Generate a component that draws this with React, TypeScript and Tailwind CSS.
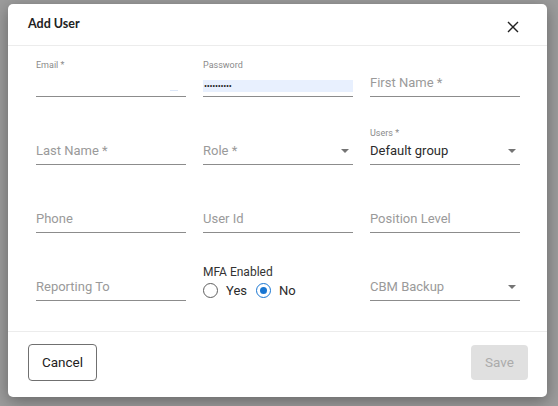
import React from 'react';

const font = { fontFamily: 'Roboto, "Liberation Sans", sans-serif' };

function Arrow() {
  return (
    <svg width="8" height="4" viewBox="0 0 8 4" className="shrink-0">
      <path d="M0 0 L8 0 L4 4 Z" fill="#747474" />
    </svg>
  );
}

function Field({
  label,
  placeholder,
  value,
  select,
}: {
  label?: string;
  placeholder?: string;
  value?: string;
  select?: boolean;
}) {
  return (
    <div className="flex h-[40px] flex-col justify-end">
      {label && <div className="mb-auto mt-[2px] text-[9px] leading-[12px] text-[#8a8a8a]">{label}</div>}
      <div className="flex h-[24px] items-center border-b border-[#8c8c8c] pb-[3px]">
        <span className={`flex-1 text-[13px] leading-[16px] ${value ? 'text-[#2b2b2b]' : 'text-[#9a9a9a]'}`}>
          {value ?? placeholder}
        </span>
        {select && (
          <span className="mr-[4px]">
            <Arrow />
          </span>
        )}
      </div>
    </div>
  );
}

function Radio({ checked }: { checked?: boolean }) {
  return (
    <span
      className={`flex h-[15px] w-[15px] items-center justify-center rounded-full border-[1.5px] ${
        checked ? 'border-[#1976d2]' : 'border-[#5f5f5f]'
      }`}
    >
      {checked && <span className="h-[7px] w-[7px] rounded-full bg-[#1976d2]" />}
    </span>
  );
}

export default function App() {
  return (
    <div className="h-[406px] w-full bg-[#9c9c9c] pl-[8px] pt-[4px]" style={font}>
      <div className="flex h-[393px] w-[539px] flex-col rounded-[5px] bg-white shadow-[0_4px_16px_rgba(0,0,0,0.35)]">
        {/* header */}
        <div className="flex h-[42px] items-center justify-between border-b border-[#ececec] pl-[20px] pr-[28px]">
          <h2
            className="text-[12.5px] font-bold text-[#222]"
            style={{ fontFamily: 'Lato, "Open Sans", sans-serif' }}
          >
            Add User
          </h2>
          <svg width="12" height="12" viewBox="0 0 12 12" className="mt-[4px]">
            <path d="M1 1 L11 11 M11 1 L1 11" stroke="#222" strokeWidth="1.4" />
          </svg>
        </div>

        {/* body */}
        <div className="grid grid-cols-[150px_150px_150px] gap-x-[17px] gap-y-[28px] border-b border-[#ececec] px-[28px] pb-[30px] pt-[11px]">
          <div className="flex h-[40px] flex-col justify-end">
            <div className="mb-auto mt-[2px] text-[9px] leading-[12px] text-[#8a8a8a]">Email *</div>
            <div className="relative h-[24px] border-b border-[#8c8c8c]">
              <span className="absolute bottom-[5px] right-[8px] h-[1px] w-[8px] bg-[#dbe6f7]" />
            </div>
          </div>
          <div className="flex h-[40px] flex-col justify-end">
            <div className="mb-auto mt-[2px] text-[9px] leading-[12px] text-[#8a8a8a]">Password</div>
            <div className="border-b border-[#8c8c8c] pb-[4px]">
              <div className="flex h-[12px] items-center bg-[#e8f0fe] pl-[1px] text-[9px] leading-none tracking-[-0.3px] text-[#222]">
                ••••••••••
              </div>
            </div>
          </div>
          <Field placeholder="First Name *" />

          <Field placeholder="Last Name *" />
          <Field placeholder="Role *" select />
          <Field label="Users *" value="Default group" select />

          <Field placeholder="Phone" />
          <Field placeholder="User Id" />
          <Field placeholder="Position Level" />

          <Field placeholder="Reporting To" />
          <div className="flex h-[40px] flex-col">
            <div className="mt-[3px] text-[12px] leading-[16px] text-[#333]">MFA Enabled</div>
            <div className="flex h-[21px] items-center text-[13px] text-[#2b2b2b]">
              <Radio />
              <span className="ml-[8px] mr-[9px]">Yes</span>
              <Radio checked />
              <span className="ml-[8px]">No</span>
            </div>
          </div>
          <Field placeholder="CBM Backup" select />
        </div>

        {/* footer */}
        <div className="flex flex-1 items-start justify-between pl-[20px] pr-[19px] pt-[12px]">
          <button className="h-[37px] w-[69px] rounded-[4px] border border-[#707070] text-[13.5px] text-[#222]">
            Cancel
          </button>
          <button className="mt-[1px] h-[35px] w-[57px] rounded-[4px] bg-[#e0e0e0] text-[13.5px] text-[#ababab]">
            Save
          </button>
        </div>
      </div>
    </div>
  );
}
